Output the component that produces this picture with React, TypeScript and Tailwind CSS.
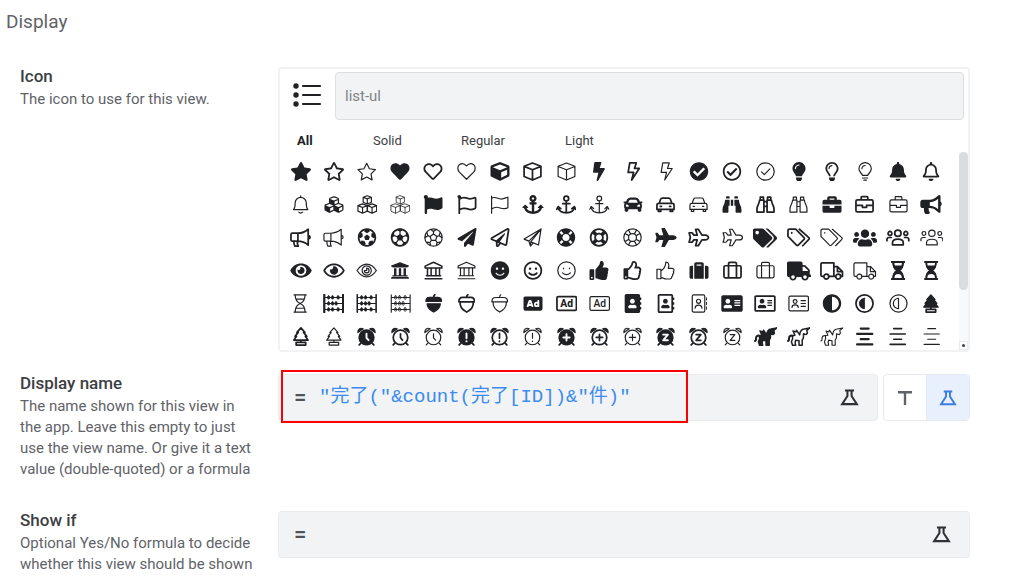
import React from "react";
import {
  FaStar, FaRegStar, FaHeart, FaRegHeart, FaCube, FaBolt, FaCheckCircle, FaRegCheckCircle,
  FaLightbulb, FaRegLightbulb, FaBell, FaRegBell, FaCubes, FaFlag, FaRegFlag, FaAnchor, FaCar,
  FaBinoculars, FaBriefcase, FaBullhorn, FaFutbol, FaRegFutbol, FaPaperPlane, FaRegPaperPlane,
  FaLifeRing, FaRegLifeRing, FaPlane, FaTags, FaUsers, FaEye, FaRegEye, FaUniversity, FaSmile,
  FaRegSmile, FaThumbsUp, FaRegThumbsUp, FaSuitcase, FaTruck, FaAd, FaAddressBook,
  FaRegAddressBook, FaAddressCard, FaRegAddressCard, FaAdjust,
} from "react-icons/fa";

type Kind = "solid" | "regular" | "light";
type Entry = { name: string; kind: Kind; node: React.ReactNode };

const REGULAR = 2.2;
const LIGHT = 1.5;

function Line({ w = 24, weight, d, children }: { w?: number; weight: number; d?: string; children?: React.ReactNode }) {
  return (
    <svg
      viewBox={`0 0 ${w} 24`}
      className="h-[19px] w-auto"
      fill="none"
      stroke="currentColor"
      strokeWidth={weight}
      strokeLinejoin="round"
      strokeLinecap="round"
      aria-hidden="true"
    >
      {d && <path d={d} />}
      {children}
    </svg>
  );
}

const shapes: Record<string, { w: number; d: string }> = {
  star: { w: 27, d: "M13.5 1.6l3.4 6.9 7.6 1.1-5.5 5.4 1.3 7.6-6.8-3.6-6.8 3.6L8 15 2.5 9.6l7.6-1.1z" },
  heart: { w: 24, d: "M12 21.8L3 12.7C.3 9.8.4 5.3 3.2 3.2 6 1.2 9.4 2 12 4.9c2.6-2.9 6-3.7 8.8-1.7 2.8 2.1 2.9 6.6.2 9.5z" },
  cube: { w: 24, d: "M12 1.2l10.6 4.2v13L12 22.8 1.4 18.4v-13zM1.4 5.6L12 9.8l10.6-4.2M12 9.8v13" },
  bolt: { w: 20, d: "M6 1.2h8.2L12 8.2h6L8.5 22.8l2.3-9.6H4z" },
  check: { w: 24, d: "M12 1a11 11 0 1 0 0 22 11 11 0 0 0 0-22zM7 12.5l3.5 3.5 7-7.4" },
  lightbulb: { w: 18, d: "M5.6 17C5 14 1.2 13 1.2 8.6a7.8 7.8 0 0 1 15.6 0C16.8 13 13 14 12.4 17zM5.8 20.2h6.4M7.4 23h3.2M9 4.4a4 4 0 0 0-4 4" },
  bell: { w: 22, d: "M11 1v2M2 18.4C4 16 4 14 4 10a7 7 0 0 1 14 0c0 4 0 6 2 8.4zM8.6 21.6q2.4 2.4 4.8 0" },
  cubes: { w: 26, d: "M13 .9l5.2 2v6.3L13 11.4 7.8 9.2V2.9zM7.8 2.9l5.2 2 5.2-2M13 4.9v6.5M7 11.2l5.8 2.2v7L7 23l-5.8-2.6v-7zM1.2 13.4L7 15.7l5.8-2.3M7 15.7V23M19 11.2l5.8 2.2v7L19 23l-5.8-2.6v-7zM13.2 13.4l5.8 2.3 5.8-2.3M19 15.7V23" },
  flag: { w: 24, d: "M2 1.5V23M2 4c5-3 9 2 13 1 3-.5 5-1.5 7.6-2.2v13.4c-6 3.4-10.6-1.2-14.6-.7-2.5.3-4 1-6 2" },
  anchor: { w: 26, d: "M13 7.4a3 3 0 1 0 0-6 3 3 0 0 0 0 6v15M8.5 11h9M2.8 15.4C3.4 20.4 7 22.6 13 22.6s9.6-2.2 10.2-7.2M1 18l1.8-3.4L6 17.2M25 18l-1.8-3.4-3.2 2.6" },
  car: { w: 24, d: "M4 10.5l2-5.4Q6.5 3.8 8 3.8h8q1.5 0 2 1.3l2 5.4M3.5 10.5h17q2.3 0 2.3 2.3v5.4H1.2v-5.4q0-2.3 2.3-2.3zM3 18.4v2.4h3v-2.4M18 18.4v2.4h3v-2.4M5.4 14.4h1.4M17.2 14.4h1.4" },
  binoculars: { w: 24, d: "M4.6 6.4H10V21.6H1.3V17c0-3.4 3-6 3.3-10.6zM5.4 6V2.8h4V6M19.4 6.4H14v15.2h8.7V17c0-3.4-3-6-3.3-10.6zM18.6 6V2.8h-4V6M10 8.5h4M10 14.5h4" },
  briefcase: { w: 24, d: "M3 6.2h18q1.8 0 1.8 1.8v11.5q0 1.8-1.8 1.8H3q-1.8 0-1.8-1.8V8Q1.2 6.2 3 6.2zM7.8 6V3q0-1 1-1h6.4q1 0 1 1v3M1.2 13.2h8.2v2.4h5.2v-2.4h8.2" },
  bullhorn: { w: 27, d: "M3 6.6h7v10H3q-1.8 0-1.8-1.8V8.4Q1.2 6.6 3 6.6zM10 6.6c5 0 9.5-2 13-5v20c-3.5-3-8-5-13-5M4.8 16.8c0 2.4.5 4.4 1.4 6.2h4.3c-1.2-2-1.4-4-1-6.2M23 9.4c3.2.6 3.2 3.8 0 4.4" },
  futbol: { w: 24, d: "M12 1a11 11 0 1 0 0 22 11 11 0 0 0 0-22zM12 7.6l4.3 3.1-1.6 5H9.3l-1.6-5zM12 7.6V4.4L8.5 1.8M12 4.4l3.5-2.6M16.3 10.7l3-1 1-4.2M19.3 9.7l3.4 2.6M14.7 15.7l1.9 2.6 4.2-.4M16.6 18.3l-1.2 4M9.3 15.7l-1.9 2.6-4.2-.4M7.4 18.3l1.2 4M7.7 10.7l-3-1-1-4.2M4.7 9.7l-3.4 2.6" },
  plane2: { w: 24, d: "M22.8 1.2L1.4 14l6 2.6 2 6.2 3.6-4 6.6 2.6zM22.8 1.2L7.4 16.6M22.8 1.2L9.8 17.6l-.4 5.2M9.8 17.6l3.2 1.2" },
  ring: { w: 24, d: "M12 1a11 11 0 1 0 0 22 11 11 0 0 0 0-22zM12 7a5 5 0 1 0 0 10 5 5 0 0 0 0-10zM7 2.4l2.6 5M2.4 7l5 2.6M17 2.4l-2.6 5M21.6 7l-5 2.6M7 21.6l2.6-5M2.4 17l5-2.6M17 21.6l-2.6-5M21.6 17l-5-2.6" },
  plane: { w: 27, d: "M9.6 1.6H13L17.6 9H22c2 0 3.8 1.4 3.8 3S24 15 22 15h-4.4L13 22.4H9.6l2-7.4H7.4l-2.2 3H1.4l1.6-6-1.6-6h3.8l2.2 3h4.2z" },
  tags: { w: 30, d: "M1.2 3.2v7.4L12 21.6q1.2 1 2.3 0l7.2-7.2q1-1.2 0-2.3L11 1.5H3Q1.2 1.5 1.2 3.2zM6 5.8v.6M15.6 1.6l12 10.6q1 1.1 0 2.2l-7.8 8" },
  users: { w: 30, d: "M15 2.6a4 4 0 1 0 0 8 4 4 0 0 0 0-8zM5 4.4a2.4 2.4 0 1 0 0 4.8 2.4 2.4 0 0 0 0-4.8zM25 4.4a2.4 2.4 0 1 0 0 4.8 2.4 2.4 0 0 0 0-4.8zM8.2 21.2v-2.4c0-3 2.4-4.6 6.8-4.6s6.8 1.6 6.8 4.6v2.4zM1.2 16v-1.4Q1.2 12 4 12h2.6M28.8 16v-1.4q0-2.6-2.8-2.6h-2.6" },
  eye: { w: 27, d: "M1.3 12C5.5 5.6 9.6 4 13.5 4s8 1.6 12.2 8c-4.2 6.4-8.3 8-12.2 8s-8-1.6-12.2-8zM13.5 6.2a5.8 5.8 0 1 0 0 11.6 5.8 5.8 0 0 0 0-11.6zM13.5 9a3 3 0 1 1-3 3h3z" },
  university: { w: 24, d: "M12 1.6L22.6 6.4v2.4H1.4V6.4zM4.4 9v9M9 9v9M15 9v9M19.6 9v9M3 18.6h18M1.4 22.4h21.2" },
  smile: { w: 24, d: "M12 1a11 11 0 1 0 0 22 11 11 0 0 0 0-22zM8.2 9v.8M15.8 9v.8M7 15q5 4.6 10 0" },
  thumb: { w: 24, d: "M1.2 10.4h5v12h-5zM6.4 12.4C10 10 12 7 12.5 1.5c3.6 0 4.6 3 3 7.7h4.9c2.4 0 3 2.8 1.5 4 .9 1.3.4 3-.9 3.7.4 1.6-.2 2.8-1.2 3.2.1 1.7-.9 2.6-2.4 2.6H13c-2.5 0-4-1.6-6.6-1.6" },
  suitcase: { w: 24, d: "M3 6h18q1.8 0 1.8 1.8v11.6q0 1.8-1.8 1.8H3q-1.8 0-1.8-1.8V7.8Q1.2 6 3 6zM7 21V3.4q0-1.6 1.6-1.6h6.8Q17 1.8 17 3.4V21M7 6h10" },
  truck: { w: 30, d: "M5 19.4H2.7q-1.5 0-1.5-1.5V3.8q0-1.5 1.5-1.5h14.8v17.1h-6.4M17.5 7H22l6.4 6.4v6h-2.2M17.5 19.4h2.4M28.4 13.4H22V7M8 16.6a3.1 3.1 0 1 0 0 6.2 3.1 3.1 0 0 0 0-6.2zM23 16.6a3.1 3.1 0 1 0 0 6.2 3.1 3.1 0 0 0 0-6.2z" },
  hourglass: { w: 18, d: "M1.2 1.2h15.6M1.2 22.8h15.6M2.8 1.4c0 6 2.4 9 6.2 10.6 3.8-1.6 6.2-4.6 6.2-10.6M2.8 22.6c0-6 2.4-9 6.2-10.6 3.8 1.6 6.2 4.6 6.2 10.6M4.2 6.4h9.6M4.4 18h9.2" },
  acorn: { w: 22, d: "M1.2 10Q.8 4.4 6 4.4h10q5.2 0 4.8 5.6zM2.6 10.2c0 6 2.4 9 5.6 10.8L11 22.8l2.8-1.8c3.2-1.8 5.6-4.8 5.6-10.8M11 4q0-2 1.4-3" },
  book: { w: 21, d: "M3.4 1.2h12.2q1.8 0 1.8 1.8v18q0 1.8-1.8 1.8H3.4Q1.6 22.8 1.6 21V3q0-1.8 1.8-1.8zM19.8 5v2.4M19.8 10.8v2.4M19.8 16.6V19M9.5 6.6a2.6 2.6 0 1 0 0 5.2 2.6 2.6 0 0 0 0-5.2zM5.2 18c0-3 1.6-4 4.3-4s4.3 1 4.3 4" },
  card: { w: 27, d: "M3 2.6h21q1.8 0 1.8 1.8v15.2q0 1.8-1.8 1.8H3q-1.8 0-1.8-1.8V4.4Q1.2 2.6 3 2.6zM9 7a2.4 2.4 0 1 0 0 4.8A2.4 2.4 0 0 0 9 7zM5 17c0-2.4 1.4-3.2 4-3.2s4 .8 4 3.2M16.6 8.4h5.4M16.6 12H22M16.6 15.6H22" },
  tree: { w: 20, d: "M10 1.2l5 5.6h-1.6l4 5h-1.8l3.4 4.8H1l3.4-4.8H2.6l4-5H5zM10 16.8v2.6M4 19.4h12v3.4H4z" },
};

const outline = (key: string, weight: number) => {
  const s = shapes[key];
  return <Line w={s.w} weight={weight} d={s.d} />;
};

const filled = (icon: React.ReactNode, wide?: boolean) => (
  <span className={wide ? "flex [&>svg]:h-5 [&>svg]:w-6" : "flex [&>svg]:h-[19px] [&>svg]:w-[22px]"}>{icon}</span>
);

function Hourglass({ weight }: { weight: number }) {
  return (
    <Line w={18} weight={weight}>
      <path d="M1.2 1.2h15.6M1.2 22.8h15.6M2.8 1.4c0 6 2.4 9 6.2 10.6 3.8-1.6 6.2-4.6 6.2-10.6M2.8 22.6c0-6 2.4-9 6.2-10.6 3.8 1.6 6.2 4.6 6.2 10.6" />
      <path fill="currentColor" d="M4 7h10c-1 2.6-2.6 4-5 5-2.4-1-4-2.4-5-5zM9 12c2.6 1.2 4 2.8 4.6 4.6Q9 13.6 4.4 16.6C5 14.8 6.4 13.2 9 12z" />
    </Line>
  );
}

function Abacus({ kind }: { kind: Kind }) {
  const weight = kind === "solid" ? 2.8 : kind === "regular" ? 2 : 1.4;
  const bead = kind === "light" ? "none" : "currentColor";
  const rows = [
    [7, 12, 19],
    [7, 12, 16.5],
    [7, 12, 19],
  ];
  return (
    <Line w={27} weight={weight}>
      <path d="M1.6 1v22M25.4 1v22" />
      <path strokeWidth={1.4} d="M2 4.4h23M2 12h23M2 19.6h23" />
      {rows.map((beads, r) =>
        beads.map((x) => (
          <rect key={`${r}-${x}`} x={x - 1.2} y={2.4 + r * 7.6} width={2.6} height={4} rx={1} fill={bead} strokeWidth={1.1} />
        )),
      )}
    </Line>
  );
}

function AcornSolid() {
  return (
    <Line w={22} weight={1.6}>
      <path fill="currentColor" d="M1.2 9.4Q.8 4.2 6 4.2h10q5.2 0 4.8 5.2z" />
      <path fill="currentColor" d="M2.6 12.4c.4 4.4 2.6 7 5.6 8.6L11 22.8l2.8-1.8c3-1.6 5.2-4.2 5.6-8.6z" />
      <path strokeWidth={2.2} d="M11 4q0-2 1.4-3" />
    </Line>
  );
}

function TreeSolid() {
  return (
    <Line w={20} weight={1.8}>
      <path fill="currentColor" d="M10 1.2l5 5.6h-1.6l4 5h-1.8l3.4 4.8H1l3.4-4.8H2.6l4-5H5z" />
      <path strokeWidth={2.2} d="M10 16.8v2.6M4 19.4h12v3.4H4z" />
    </Line>
  );
}

function AdBox({ kind }: { kind: Kind }) {
  return (
    <Line w={27} weight={kind === "regular" ? 2.2 : 1.5}>
      <rect x={1.2} y={3.4} width={24.6} height={17.2} rx={1.8} />
      <text
        x={13.5}
        y={16.6}
        textAnchor="middle"
        fill="currentColor"
        stroke="none"
        fontSize={13}
        fontFamily="Roboto, sans-serif"
        fontWeight={kind === "regular" ? 800 : 500}
      >
        Ad
      </text>
    </Line>
  );
}

function Contrast({ weight }: { weight: number }) {
  return (
    <Line weight={weight}>
      <circle cx={12} cy={12} r={10.8} />
      <path fill={weight > 2 ? "currentColor" : "none"} strokeWidth={weight > 2 ? 1 : weight} d="M12 5.4v13.2a6.6 6.6 0 0 1 0-13.2z" />
    </Line>
  );
}

function Alarm({ kind, mark }: { kind: Kind; mark: "hands" | "bang" | "plus" | "snooze" }) {
  const weight = kind === "light" ? LIGHT : REGULAR;
  const solid = kind === "solid";
  const marks = {
    hands: "M12 8.6v5l2.6 3",
    bang: "M12 8v6.2M12 17.8v.4",
    plus: "M12 9.2v8M8 13.2h8",
    snooze: "M9 9.6h6l-6 7.2h6",
  };
  return (
    <Line weight={weight}>
      <path d="M4.6 20.6l-1.8 2M19.4 20.6l1.8 2" />
      <path fill={kind === "light" ? "none" : "currentColor"} strokeWidth={LIGHT} d="M1.2 7C.6 3 4 .4 7.8 2.2zM22.8 7C23.4 3 20 .4 16.2 2.2z" />
      <circle cx={12} cy={13.2} r={9.2} fill={solid ? "currentColor" : "none"} />
      <path d={marks[mark]} stroke={solid ? "white" : "currentColor"} strokeWidth={solid ? 2.4 : weight} />
    </Line>
  );
}

function Alicorn({ kind }: { kind: Kind }) {
  return (
    <Line w={30} weight={kind === "light" ? 1.4 : 1.9}>
      <path
        fill={kind === "solid" ? "currentColor" : "none"}
        d="M7 11l3-.6L7.6 5l3.6 1.2L12 4l4 6c.4-4.4 2-7 5.6-7.4L28.8 1.2 25 4.2l.8 3.6-1.6 1.8-3.4-1V13c0 1.6-.6 2.4-1.6 3.2V23h-4v-5.6L11 16.6l-.8 2.6.8 3.8H7L5.6 18.6l1.4-3.4z"
      />
      <path d="M7 11c-3-.6-4.8 1-4.4 4.4Q2.6 17 1.2 17.6" strokeWidth={kind === "light" ? 1.4 : 2.6} />
    </Line>
  );
}

function Bars({ kind }: { kind: Kind }) {
  return <Line w={22} weight={kind === "solid" ? 2.8 : kind === "regular" ? 2 : 1.4} d="M6 2h10M1.4 8.8h19.2M6 15.4h10M1.4 22h19.2" />;
}

const trio = (name: string, solid: React.ReactNode, regular: React.ReactNode, light: React.ReactNode): Entry[] => [
  { name, kind: "solid", node: solid },
  { name, kind: "regular", node: regular },
  { name, kind: "light", node: light },
];

const basic = (name: string, key: string, solid: React.ReactNode, regular?: React.ReactNode) =>
  trio(name, filled(solid), regular ? filled(regular) : outline(key, REGULAR), outline(key, LIGHT));

const wide = (name: string, key: string, solid: React.ReactNode) =>
  trio(name, filled(solid, true), outline(key, REGULAR), outline(key, LIGHT));

const alarm = (name: string, mark: "hands" | "bang" | "plus" | "snooze") =>
  trio(name, <Alarm kind="solid" mark={mark} />, <Alarm kind="regular" mark={mark} />, <Alarm kind="light" mark={mark} />);

const icons: Entry[] = [
  ...basic("star", "star", <FaStar />, <FaRegStar />),
  ...basic("heart", "heart", <FaHeart />, <FaRegHeart />),
  ...basic("cube", "cube", <FaCube />),
  ...basic("bolt", "bolt", <FaBolt />),
  ...basic("check-circle", "check", <FaCheckCircle />, <FaRegCheckCircle />),
  ...basic("lightbulb", "lightbulb", <FaLightbulb />, <FaRegLightbulb />),
  ...basic("bell", "bell", <FaBell />, <FaRegBell />),
  ...trio("cubes", filled(<FaCubes />), outline("cubes", 1.5), outline("cubes", 1)),
  ...basic("flag", "flag", <FaFlag />, <FaRegFlag />),
  ...basic("anchor", "anchor", <FaAnchor />),
  ...basic("car", "car", <FaCar />),
  ...basic("binoculars", "binoculars", <FaBinoculars />),
  ...basic("briefcase", "briefcase", <FaBriefcase />),
  ...basic("bullhorn", "bullhorn", <FaBullhorn />),
  ...basic("futbol", "futbol", <FaFutbol />, <FaRegFutbol />),
  ...basic("paper-plane", "plane2", <FaPaperPlane />, <FaRegPaperPlane />),
  ...basic("life-ring", "ring", <FaLifeRing />, <FaRegLifeRing />),
  ...basic("plane", "plane", <FaPlane />),
  ...wide("tags", "tags", <FaTags />),
  ...wide("users", "users", <FaUsers />),
  ...basic("eye", "eye", <FaEye />, <FaRegEye />),
  ...trio("university", filled(<FaUniversity />), outline("university", 1.9), outline("university", LIGHT)),
  ...basic("smile", "smile", <FaSmile />, <FaRegSmile />),
  ...basic("thumbs-up", "thumb", <FaThumbsUp />, <FaRegThumbsUp />),
  ...basic("suitcase", "suitcase", <FaSuitcase />),
  ...wide("truck", "truck", <FaTruck />),
  ...trio("hourglass", <Hourglass weight={2.8} />, <Hourglass weight={2.4} />, outline("hourglass", LIGHT)),
  ...trio("abacus", <Abacus kind="solid" />, <Abacus kind="regular" />, <Abacus kind="light" />),
  ...trio("acorn", <AcornSolid />, outline("acorn", REGULAR), outline("acorn", LIGHT)),
  ...trio("ad", filled(<FaAd />), <AdBox kind="regular" />, <AdBox kind="light" />),
  ...basic("address-book", "book", <FaAddressBook />, <FaRegAddressBook />),
  ...basic("address-card", "card", <FaAddressCard />, <FaRegAddressCard />),
  ...trio("adjust", filled(<FaAdjust />), <Contrast weight={REGULAR} />, <Contrast weight={LIGHT} />),
  ...trio("air-freshener", <TreeSolid />, outline("tree", REGULAR), outline("tree", LIGHT)),
  ...alarm("alarm-clock", "hands"),
  ...alarm("alarm-exclamation", "bang"),
  ...alarm("alarm-plus", "plus"),
  ...alarm("alarm-snooze", "snooze"),
  ...trio("alicorn", <Alicorn kind="solid" />, <Alicorn kind="regular" />, <Alicorn kind="light" />),
  ...trio("align-center", <Bars kind="solid" />, <Bars kind="regular" />, <Bars kind="light" />),
];

function Flask({ className }: { className: string }) {
  return (
    <svg viewBox="0 0 20 18" className={className} fill="none" stroke="currentColor" strokeWidth={2.2} aria-hidden="true">
      <path d="M5.2 1.6h9.6M7.8 2v5.4L2.2 16h15.6l-5.6-8.6V2" />
    </svg>
  );
}

function Row({ id, title, text, className, children }: { id: string; title: string; text: string; className: string; children: React.ReactNode }) {
  return (
    <div className={`flex items-start ${className}`}>
      <div className="w-[258px] shrink-0 pr-[22px]">
        <label htmlFor={id} className="block text-[17px] leading-[18px] font-medium text-[#3c4043]">
          {title}
        </label>
        <p className="mt-1 text-[15px] leading-[21px] text-[#5f6368]">{text}</p>
      </div>
      <div className="min-w-0 flex-1">{children}</div>
    </div>
  );
}

function Formula({ id, value }: { id: string; value: string }) {
  return (
    <div className="flex h-[47px] min-w-0 flex-1 items-center rounded border border-[#e8eaed] bg-[#f1f3f4] pr-[18px] pl-[15px]">
      <span className="w-[25px] text-[22px] leading-6 font-medium text-[#505357]">=</span>
      <input
        id={id}
        defaultValue={value}
        className="min-w-0 flex-1 bg-transparent font-['Liberation_Mono','Noto_Sans_CJK_JP',monospace] text-[19px] text-[#3b8bf0] outline-none"
      />
      <button type="button" aria-label="Open expression editor" className="text-[#303134]">
        <Flask className="h-[17px] w-[19px]" />
      </button>
    </div>
  );
}

export default function App() {
  return (
    <main className="bg-white font-['Roboto','Noto_Sans_CJK_JP',sans-serif]">
      <h2 className="px-1.5 pt-2.5 text-[19px] leading-6 text-[#5f6368]">Display</h2>
      <form className="pr-[54px] pl-5">
        <Row id="icon" title="Icon" text="The icon to use for this view." className="mt-[33px]">
          <div className="rounded border-2 border-[#f1f2f3]">
            <div className="flex items-center pt-[3px] pr-1 pl-3">
              <svg viewBox="0 0 30 26" className="h-[26px] w-[30px] shrink-0 text-[#202124]" stroke="currentColor" strokeWidth={2.2} strokeLinecap="round" aria-hidden="true">
                <path d="M11 3h17M11 12h17M11 21h17" />
                <g fill="currentColor" stroke="none">
                  <circle cx={4} cy={3} r={2.7} />
                  <circle cx={4} cy={12} r={2.7} />
                  <circle cx={4} cy={21} r={2.7} />
                </g>
              </svg>
              <input
                id="icon"
                defaultValue="list-ul"
                className="ml-[13px] h-12 min-w-0 flex-1 rounded border border-[#dcdfdf] bg-[#f1f3f4] px-[9px] text-[15px] text-[#808488] outline-none"
              />
            </div>
            <div className="mt-2.5 flex pl-[17px] text-[13px] leading-[22px] text-[#3c4043]">
              <button type="button" className="w-[76px] text-left font-bold text-[#202124]">All</button>
              <button type="button" className="w-[88px] text-left">Solid</button>
              <button type="button" className="w-[104px] text-left">Regular</button>
              <button type="button" className="text-left">Light</button>
            </div>
            <div className="flex h-[198px]">
              <div className="grid flex-1 auto-rows-[33px] grid-cols-[repeat(20,minmax(0,1fr))] content-start overflow-hidden pt-[3px] pr-[11px] pl-1 text-[#202124]">
                {icons.map((icon) => (
                  <button
                    key={`${icon.name}-${icon.kind}`}
                    type="button"
                    aria-label={`${icon.name} ${icon.kind}`}
                    className="flex items-center justify-center"
                  >
                    {icon.node}
                  </button>
                ))}
              </div>
              <div className="flex w-[9px] flex-col justify-between bg-[#f8f9fa]">
                <div className="h-[138px] rounded-full bg-[#dadce0]" />
                <div className="flex h-[9px] items-center justify-center border border-[#e8eaed] bg-white">
                  <span className="size-[3px] rounded-full bg-[#3c4043]" />
                </div>
              </div>
            </div>
          </div>
        </Row>

        <Row
          id="display-name"
          title="Display name"
          text="The name shown for this view in the app. Leave this empty to just use the view name. Or give it a text value (double-quoted) or a formula"
          className="mt-[22px]"
        >
          <div className="relative flex gap-[5px]">
            <Formula id="display-name" value={'"完了("&count(完了[ID])&"件)"'} />
            <div className="flex h-[47px] w-[87px] overflow-hidden rounded border border-[#e8eaed]">
              <button type="button" aria-label="Text" className="flex flex-1 items-center justify-center border-r border-[#e8eaed] text-[#5f6368]">
                <svg viewBox="0 0 16 16" className="size-4" stroke="currentColor" strokeWidth={2.4} aria-hidden="true">
                  <path d="M1 2.2h14M8 2v13" />
                </svg>
              </button>
              <button type="button" aria-label="Formula" className="flex flex-1 items-center justify-center bg-[#e8f0fe] text-[#3b7de0]">
                <Flask className="h-4 w-[18px]" />
              </button>
            </div>
            <div className="pointer-events-none absolute -top-1 left-[3px] h-[53px] w-[407px] border-2 border-[#ff0000]" />
          </div>
        </Row>

        <Row id="show-if" title="Show if" text="Optional Yes/No formula to decide whether this view should be shown" className="mt-[31px]">
          <Formula id="show-if" value="" />
        </Row>
      </form>
    </main>
  );
}
